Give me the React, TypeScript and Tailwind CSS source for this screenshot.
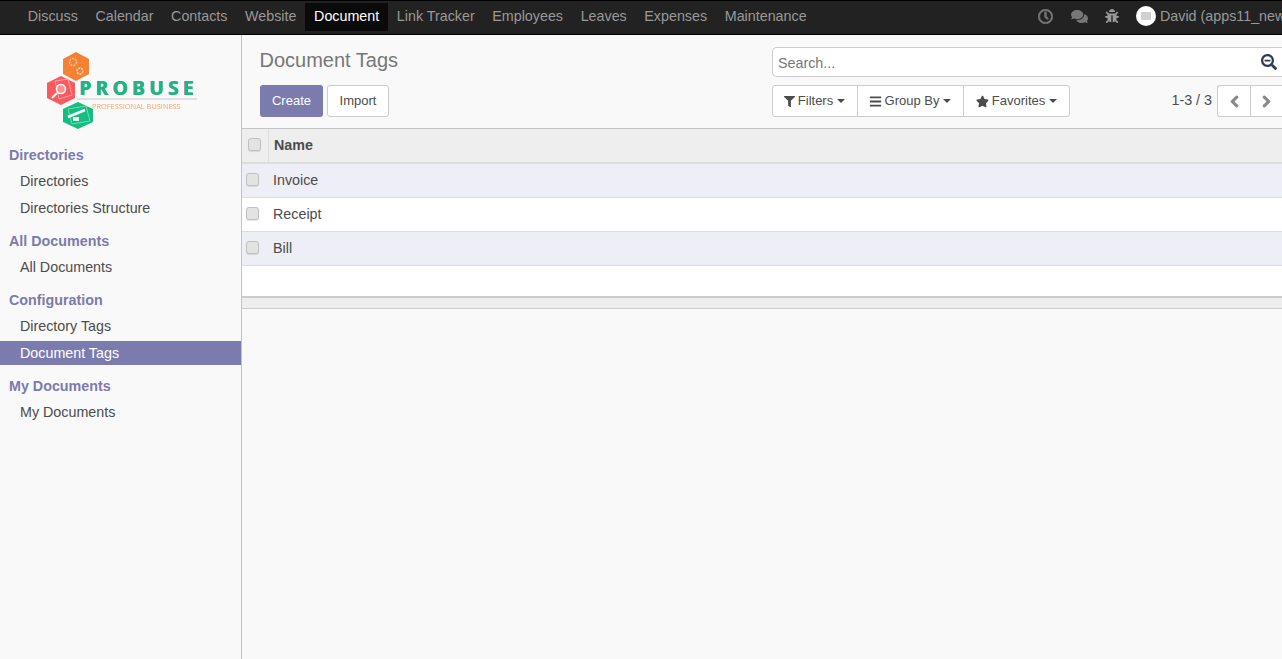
import React from 'react';
import { FaBars, FaBug, FaChevronLeft, FaChevronRight, FaComments, FaFilter, FaRegClock, FaSearchMinus, FaStar } from 'react-icons/fa';

const apps = ['Discuss', 'Calendar', 'Contacts', 'Website', 'Document', 'Link Tracker', 'Employees', 'Leaves', 'Expenses', 'Maintenance'];

const menu = [
  { title: 'Directories', items: ['Directories', 'Directories Structure'] },
  { title: 'All Documents', items: ['All Documents'] },
  { title: 'Configuration', items: ['Directory Tags', 'Document Tags'] },
  { title: 'My Documents', items: ['My Documents'] },
];

const rows = ['Invoice', 'Receipt', 'Bill'];

const Caret = () => <span className="ml-1 inline-block border-x-[4.5px] border-t-[4.5px] border-x-transparent border-t-[#4c4c4c] align-middle" />;

const Check = () => <span className="block h-[13px] w-[13px] rounded-[3px] border border-[#c0c0c0] bg-[#e3e3e3] shadow-[0_1px_1px_rgba(0,0,0,0.1)]" />;

const Logo = () => (
  <svg width="152" height="80" viewBox="0 0 152 80" className="block blur-[0.35px]">
    <polygon points="30,1 43,8 43,23 30,30 17,23 17,8" fill="#f58233" />
    <circle cx="27" cy="11" r="3.5" fill="none" stroke="#fbc39b" strokeWidth="1.5" strokeDasharray="2 1" />
    <circle cx="34" cy="20" r="3" fill="none" stroke="#fbd3b8" strokeWidth="1.5" strokeDasharray="2 1" />
    <polygon points="15,25 29,32 29,47 15,54 1,47 1,32" fill="#f9595f" />
    <polygon points="9,30 22,28 26,44 13,48" fill="none" stroke="#fca4a6" />
    <circle cx="15" cy="38" r="4.5" fill="#fb8f92" stroke="#fff" strokeWidth="1.5" />
    <line x1="11" y1="42" x2="6" y2="47" stroke="#fff" strokeWidth="2" />
    <polygon points="32,51 47,58 47,71 32,78 17,71 17,58" fill="#12bf80" />
    <polygon points="22,58 40,55 44,70 26,73" fill="none" stroke="#6fdcb4" />
    <line x1="22" y1="66" x2="39" y2="59" stroke="#fff" strokeWidth="2.5" />
    <rect x="27" y="66" width="6" height="4" fill="#dff7ee" />
    <line x1="31" y1="48" x2="151" y2="48" stroke="#d9d9d9" strokeWidth="1.5" />
    <text x="34" y="44" fill="#14b985" fontSize="19" fontWeight="700" letterSpacing="4.4" fontFamily='"Open Sans", sans-serif' className="[filter:drop-shadow(-1px_0_0_#8a8a8a)]">PROBUSE</text>
    <text x="46" y="58" fill="#f9a66c" fontSize="7.4" fontFamily='"Open Sans", sans-serif'>PROFESSIONAL BUSINESS</text>
  </svg>
);

export default function App() {
  return (
    <div className="flex h-[659px] flex-col overflow-hidden bg-[#f9f9f9] font-['Liberation_Sans',Arial,sans-serif] text-[14.3px] text-[#4c4c4c]">
      <nav className="flex h-[35px] shrink-0 items-start justify-between border-y border-y-black bg-[#222222] text-[#999999]">
        <div className="flex pl-[19px] pt-[2px]">
          {apps.map(app => (
            <a key={app} className={`flex h-[28px] items-center px-[8.8px] pb-[1px] ${app === 'Document' ? 'bg-[#0a0a0a] text-white' : ''}`}>{app}</a>
          ))}
        </div>
        <div className="flex h-[30px] items-center whitespace-nowrap">
          <FaRegClock className="mr-[18px] stroke-current stroke-[24] text-[15px] text-[#777777]" />
          <FaComments className="mr-[17px] text-[17px] text-[#777777]" />
          <FaBug className="mr-[17px] text-[14px] text-[#999999]" />
          <span className="mr-[4px] flex h-5 w-5 items-center justify-center rounded-full bg-white">
            <span className="h-2 w-2.5 rounded-[1px] bg-[#d0d0d0]" />
          </span>
          <span className="w-[122px] overflow-hidden pt-[1px]">David (apps11_new)</span>
        </div>
      </nav>

      <div className="flex min-h-0 flex-1">
        <aside className="w-[242px] shrink-0 border-r border-r-[#c4c4c4] bg-[#f9f9f9]">
          <div className="flex h-[106px] justify-start pl-[46px] pt-[16px]">
            <Logo />
          </div>
          {menu.map(group => (
            <div key={group.title} className="mb-[7px]">
              <div className="flex h-[28px] items-center pl-[9px] pt-[2px] font-bold text-[#7c7bad]">{group.title}</div>
              {group.items.map(item => (
                <a key={item} className={`flex h-[24px] items-center pl-[20px] pt-[2px] [&:not(:last-child)]:mb-[3px] ${item === 'Document Tags' ? 'bg-[#7c7bad] text-white' : ''}`}>{item}</a>
              ))}
            </div>
          ))}
        </aside>

        <main className="min-w-0 flex-1">
          <div className="flex h-[94px] border-b border-b-[#c4c4c4] pl-[18px]">
            <div className="w-[512px] shrink-0 pt-[12px]">
              <h1 className="-ml-[0.5px] text-[20px] leading-[26px] text-[#777777]">Document Tags</h1>
              <div className="mt-[12px] flex gap-[4px] text-[13px]">
                <button className="h-[32px] w-[63px] rounded-[3px] bg-[#7c7bad] text-white">Create</button>
                <button className="h-[32px] w-[62px] rounded-[3px] border border-[#cccccc] bg-white">Import</button>
              </div>
            </div>
            <div className="min-w-0 flex-1 pt-[12px]">
              <div className="flex h-[30px] items-center justify-between rounded-l-[5px] border border-r-0 border-[#cccccc] bg-white pl-[5px] pr-[5px] text-[#777777]">
                <span className="pt-[4px]">Search...</span>
                <FaSearchMinus className="text-[16px] text-[#2c3e50]" />
              </div>
              <div className="mt-[8px] flex items-center text-[13px]">
                <div className="flex h-[32px] rounded-[3px] border border-[#cccccc] bg-white">
                  <button className="flex w-[85px] items-center justify-center border-r border-r-[#cccccc] pr-[1px]"><FaFilter className="mr-[3px] text-[11px]" />Filters<Caret /></button>
                  <button className="flex w-[106px] items-center justify-center border-r border-r-[#cccccc] pr-[1px]"><FaBars className="mr-[3px] text-[13px]" />Group By<Caret /></button>
                  <button className="flex w-[105px] items-center justify-center"><FaStar className="mr-[3px] text-[13px]" />Favorites<Caret /></button>
                </div>
                <span className="ml-auto mr-[5px] text-[14.3px]">1-3 / 3</span>
                <div className="flex h-[32px] w-[65px] shrink-0 rounded-l-[3px] border border-r-0 border-[#cccccc] bg-white text-[#888888]">
                  <span className="flex w-[33px] items-center justify-center border-r border-r-[#cccccc]"><FaChevronLeft className="stroke-current stroke-[40] text-[13px]" /></span>
                  <span className="flex flex-1 items-center justify-center"><FaChevronRight className="stroke-current stroke-[40] text-[13px]" /></span>
                </div>
              </div>
            </div>
          </div>

          <div className="flex h-[35px] items-center border-b-2 border-b-[#dddddd] bg-[#eeeeee] font-bold">
            <span className="flex h-full w-[27px] items-center justify-center border-r border-r-[#dddddd] pb-[3px] pr-[1px]"><Check /></span>
            <span className="pl-[5px]">Name</span>
          </div>
          {rows.map((row, i) => (
            <div key={row} className={`flex h-[34px] items-center border-b border-b-[#dddddd] ${i % 2 === 0 ? 'bg-[#eeeef6]' : 'bg-white'}`}>
              <span className="flex w-[17px] justify-end pb-[2px]"><Check /></span>
              <span className="pl-[14px]">{row}</span>
            </div>
          ))}
          <div className="h-[32px] border-b-2 border-b-[#cccccc] bg-white" />
          <div className="h-[11px] border-b border-b-[#cccccc] bg-[#eeeeee]" />
        </main>
      </div>
    </div>
  );
}
